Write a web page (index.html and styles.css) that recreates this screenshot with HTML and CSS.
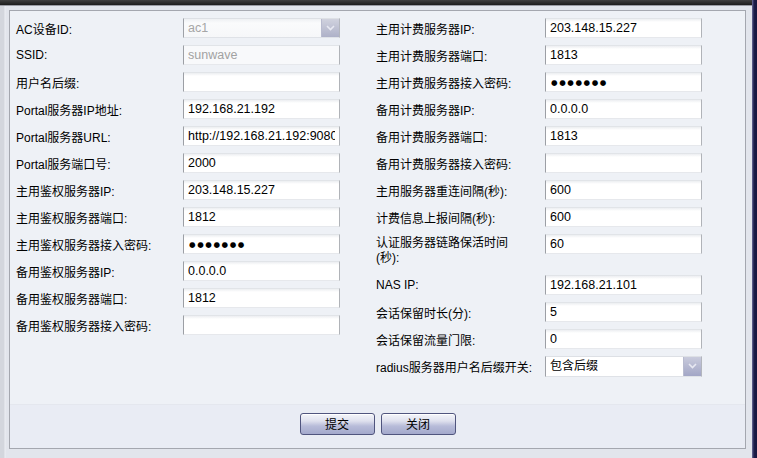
FILE: index.html
```html
<!DOCTYPE html>
<html lang="zh-CN">
<head>
<meta charset="utf-8">
<title>AC设备配置</title>
<link rel="stylesheet" href="styles.css">
</head>
<body>
<div class="frame">
  <div class="main">
    <div class="topbar"></div>
    <div class="outer">
      <div class="box">
        <div class="form">
          <div class="col col-left">
            <div class="row"><label>AC设备ID:</label>
              <div class="select disabled"><span class="sel-text">ac1</span><span class="arrow"><svg width="9" height="6" viewBox="0 0 9 6"><path d="M1 1 L4.5 4.5 L8 1" fill="none" stroke="#e8e9f2" stroke-width="1.6"/></svg></span></div>
            </div>
            <div class="row"><label>SSID:</label><input class="inp dis" type="text" value="sunwave" readonly></div>
            <div class="row"><label>用户名后缀:</label><input class="inp" type="text" value=""></div>
            <div class="row"><label>Portal服务器IP地址:</label><input class="inp" type="text" value="192.168.21.192"></div>
            <div class="row"><label>Portal服务器URL:</label><input class="inp" type="text" value="http://192.168.21.192:9080/portal"></div>
            <div class="row"><label>Portal服务端口号:</label><input class="inp" type="text" value="2000"></div>
            <div class="row"><label>主用鉴权服务器IP:</label><input class="inp" type="text" value="203.148.15.227"></div>
            <div class="row"><label>主用鉴权服务器端口:</label><input class="inp" type="text" value="1812"></div>
            <div class="row"><label>主用鉴权服务器接入密码:</label><input class="inp pwd" type="text" value="●●●●●●●"></div>
            <div class="row"><label>备用鉴权服务器IP:</label><input class="inp" type="text" value="0.0.0.0"></div>
            <div class="row"><label>备用鉴权服务器端口:</label><input class="inp" type="text" value="1812"></div>
            <div class="row"><label>备用鉴权服务器接入密码:</label><input class="inp" type="text" value=""></div>
          </div>
          <div class="col col-right">
            <div class="row"><label>主用计费服务器IP:</label><input class="inp" type="text" value="203.148.15.227"></div>
            <div class="row"><label>主用计费服务器端口:</label><input class="inp" type="text" value="1813"></div>
            <div class="row"><label>主用计费服务器接入密码:</label><input class="inp pwd" type="text" value="●●●●●●●"></div>
            <div class="row"><label>备用计费服务器IP:</label><input class="inp" type="text" value="0.0.0.0"></div>
            <div class="row"><label>备用计费服务器端口:</label><input class="inp" type="text" value="1813"></div>
            <div class="row"><label>备用计费服务器接入密码:</label><input class="inp" type="text" value=""></div>
            <div class="row"><label>主用服务器重连间隔(秒):</label><input class="inp" type="text" value="600"></div>
            <div class="row"><label>计费信息上报间隔(秒):</label><input class="inp" type="text" value="600"></div>
            <div class="row tall"><label>认证服务器链路保活时间(秒):</label><input class="inp" type="text" value="60"></div>
            <div class="row"><label>NAS IP:</label><input class="inp" type="text" value="192.168.21.101"></div>
            <div class="row"><label>会话保留时长(分):</label><input class="inp" type="text" value="5"></div>
            <div class="row"><label>会话保留流量门限:</label><input class="inp" type="text" value="0"></div>
            <div class="row"><label>radius服务器用户名后缀开关:</label>
              <div class="select tallsel"><span class="sel-text">包含后缀</span><span class="arrow"><svg width="9" height="6" viewBox="0 0 9 6"><path d="M1 1 L4.5 4.5 L8 1" fill="none" stroke="#e8e9f2" stroke-width="1.6"/></svg></span></div>
            </div>
          </div>
        </div>
        <div class="buttons">
          <button class="btn" type="button">提交</button>
          <button class="btn" type="button">关闭</button>
        </div>
      </div>
    </div>
  </div>
  <div class="rightstrip"></div>
</div>
</body>
</html>
```
FILE: styles.css
```css
html, body {
  margin: 0;
  padding: 0;
}
body {
  width: 757px;
  height: 458px;
  overflow: hidden;
  background: #dfe2ea;
  font-family: "Liberation Sans", "Noto Sans CJK SC", sans-serif;
  font-size: 12px;
  color: #000;
}
.frame {
  display: flex;
  height: 458px;
}
.main {
  flex: 1;
  display: flex;
  flex-direction: column;
}
.topbar {
  height: 5px;
  background: linear-gradient(#404040, #1c1c1c);
  border-bottom: 1px solid #9a9ca4;
}
.outer {
  flex: 1;
  padding: 4px 6px 9px 9px;
  background: linear-gradient(to right, #d3d6dd 0, #d3d6dd 4px, #eceef3 5px, #e2e5ec 6px, #e2e5ec 100%);
  display: flex;
}
.rightstrip {
  width: 5px;
  background: linear-gradient(to right, #6c6e9a, #1d1d4a 2px, #16163e);
}
.box {
  flex: 1;
  border: 1px solid #a4a7af;
  background: #eef1f6;
  display: flex;
  flex-direction: column;
}
.form {
  height: 393px;
  box-sizing: border-box;
  padding: 7px 0 0 6px;
  display: flex;
  gap: 36px;
}
.col {
  display: flex;
  flex-direction: column;
  gap: 7px;
}
.row {
  display: flex;
  align-items: center;
  height: 20px;
}
.col-left label { width: 167px; }
.col-right label { width: 169px; }
label {
  white-space: nowrap;
  overflow: visible;
}
.row.tall {
  height: 34px;
  align-items: flex-start;
}
.row.tall label {
  white-space: normal;
  line-height: 15px;
  padding-top: 2px;
  width: 155px;
  margin-right: 14px;
}
.inp {
  box-sizing: border-box;
  width: 157px;
  height: 20px;
  margin: 0;
  padding: 0 4px;
  font-family: "Liberation Sans", "Noto Sans CJK SC", sans-serif;
  font-size: 12.5px;
  color: #000;
  background: linear-gradient(#eceef1 0, #ffffff 3px, #ffffff 100%);
  border: 1px solid;
  border-color: #e1e4e8 #b0b3b8 #e6e8ec #9c9fa5;
  outline: none;
}
.inp.dis {
  color: #a2a2a2;
  background: #f8f9fb;
}
.inp.pwd {
  font-family: "DejaVu Sans", sans-serif;
  font-size: 7.5px;
  letter-spacing: 1.6px;
  padding-left: 5px;
}
.select {
  box-sizing: border-box;
  width: 157px;
  height: 20px;
  display: flex;
  border: 1px solid;
  border-color: #dde0e5 #b3b6bd #dfe2e7 #9ea1a7;
  background: #fff;
}
.select.tallsel {
  height: 21px;
}
.select.disabled {
  background: linear-gradient(#eef0f3, #fafbfc 4px, #f6f7f9);
}
.sel-text {
  flex: 1;
  padding-left: 4px;
  line-height: 18px;
  font-size: 12px;
}
.disabled .sel-text {
  color: #a6a6a6;
  font-size: 12.5px;
}
.arrow {
  width: 17px;
  display: flex;
  align-items: center;
  justify-content: center;
  background: linear-gradient(#c9cbdc, #a2a6c6);
  border-left: 1px solid #b8bbcf;
}
.disabled .arrow {
  background: linear-gradient(#d0d2de, #aeb1c8);
}
.buttons {
  flex: 1;
  background: #e9ecf4;
  border-top: 1px solid #e4e7ee;
  display: flex;
  justify-content: center;
  align-items: flex-start;
  gap: 6px;
  padding-top: 8px;
}
.btn {
  width: 75px;
  height: 22px;
  margin: 0;
  padding: 0;
  border: 1px solid #50557e;
  border-radius: 3px;
  background: linear-gradient(#f4f5fa 0, #dfe1ee 35%, #b8bcd9 60%, #a4a9cc 100%);
  font-family: "Noto Sans CJK SC", sans-serif;
  font-size: 12px;
  color: #000;
  line-height: 18px;
  box-shadow: inset 0 1px 0 #ffffff;
}
```
